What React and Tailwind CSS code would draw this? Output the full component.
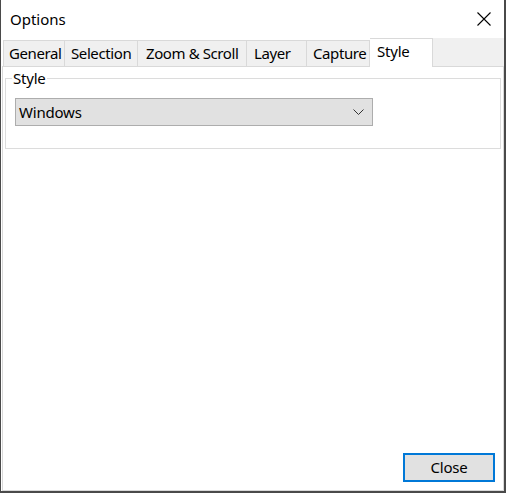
const tabs = [
    { name: 'General', w: 'w-[62px]', pl: 'pl-[5px]' },
    { name: 'Selection', w: 'w-[73px]', pl: 'pl-[6px]' },
    { name: 'Zoom & Scroll', w: 'w-[109px]', pl: 'pl-[8px]' },
    { name: 'Layer', w: 'w-[60px]', pl: 'pl-[7px]' },
    { name: 'Capture', w: 'w-[63px]', pl: 'pl-[6px]' },
]

const App = () => {
    return (
        <div
            className="w-[506px] h-[493px] bg-white border-l border-r-2 border-b-2 border-[#4a4a4a] flex flex-col text-[#000] overflow-hidden"
            style={{ fontFamily: '"Noto Sans", "Open Sans", sans-serif' }}
        >
            {/* title bar */}
            <div className="h-[38px] flex items-center justify-between pl-[9px] pr-[13px] shrink-0">
                <span className="text-[15px] leading-none">Options</span>
                <svg width="14" height="14" viewBox="0 0 14 14" className="text-black">
                    <path d="M0.5 0.5 L13.5 13.5 M13.5 0.5 L0.5 13.5" stroke="currentColor" strokeWidth="1.1" fill="none" />
                </svg>
            </div>

            {/* tabs */}
            <div className="h-[28px] flex items-end shrink-0">
                <div className="w-[2px] h-full" />
                {tabs.map((t, i) => (
                    <div
                        key={t.name}
                        className={`${t.w} ${t.pl} h-[26px] bg-[#f0f0f0] border-t border-[#d9d9d9] ${i === 0 ? 'border-l' : ''} border-r flex items-center text-[15px] tracking-[-0.4px] whitespace-nowrap`}
                    >
                        {t.name}
                    </div>
                ))}
                <div className="w-[63px] h-[29px] -mb-px bg-white border-t border-r border-[#d9d9d9] flex items-start pt-[1px] pl-[7px] text-[15px] tracking-[-0.2px] relative z-10">
                    Style
                </div>
                <div className="flex-1 h-full bg-[#f0f0f0]" />
            </div>

            {/* panel */}
            <div className="flex-1 ml-px border border-[#d9d9d9] bg-white flex flex-col">
                <fieldset className="mt-[2px] ml-[2px] w-[496px] h-[80px] border border-[#dcdcdc]">
                    <legend className="ml-[6px] px-px text-[15px] leading-[19px] tracking-[-0.2px]">Style</legend>
                    <div className="mt-[10px] ml-[9px] w-[358px] h-[28px] bg-[#e1e1e1] border border-[#adadad] flex items-center justify-between pl-[3px] pr-[8px] text-[15px] tracking-[-0.2px]">
                        <span>Windows</span>
                        <svg width="11" height="6" viewBox="0 0 11 6">
                            <path d="M0.5 0.5 L5.5 5.5 L10.5 0.5" stroke="#333" strokeWidth="1" fill="none" />
                        </svg>
                    </div>
                </fieldset>

                <div className="flex-1" />

                <div className="flex justify-end pr-[8px] pb-[8px]">
                    <button className="w-[92px] h-[29px] bg-[#e1e1e1] border-2 border-[#0078d7] text-[15px] tracking-[-0.2px] flex items-center justify-center">
                        Close
                    </button>
                </div>
            </div>
        </div>
    )
}

export default App
